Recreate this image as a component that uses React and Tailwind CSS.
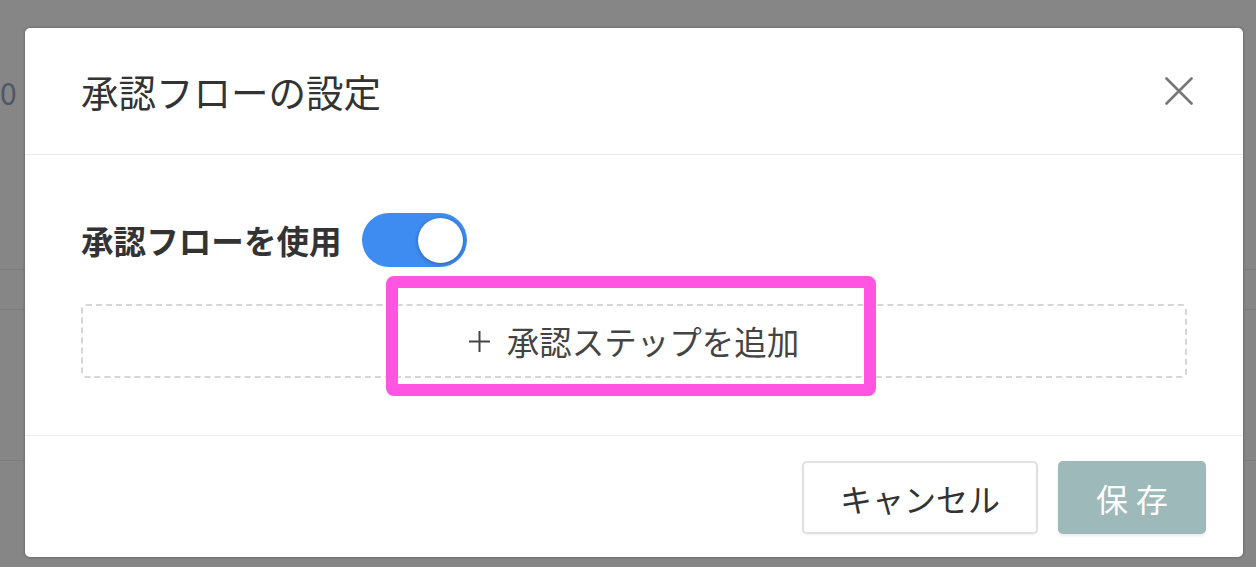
import { useState } from "react";

function Toggle({ on, onChange }) {
  return (
    <button
      type="button"
      onClick={() => onChange(!on)}
      className={`relative flex h-[54px] w-[105px] items-center rounded-full px-[4px] transition ${
        on ? "justify-end bg-[#3e8bf1]" : "justify-start bg-[#cfcfcf]"
      }`}
    >
      <span className="block h-[45px] w-[45px] rounded-full bg-white shadow-[0_1px_4px_rgba(0,0,0,0.3)]" />
    </button>
  );
}

export default function App() {
  const [usarFluxo, setUsarFluxo] = useState(true);

  return (
    <div
      className="relative h-[567px] w-[1256px] overflow-hidden bg-[#868686]"
      style={{ fontFamily: '"Noto Sans CJK JP", "Noto Sans", sans-serif' }}
    >
      {/* pagina por tras do overlay */}
      <div className="flex flex-col">
        <div className="flex h-[270px] items-start border-b border-[#7d7d7d] pt-[72px]">
          <span className="text-[30px] leading-[40px] text-[#4d5866]">0</span>
        </div>
        <div className="h-[40px] border-b border-[#7d7d7d]" />
        <div className="h-[151px] border-b border-[#7d7d7d]" />
      </div>

      {/* modal */}
      <div className="absolute left-[25px] top-[28px] flex w-[1218px] flex-col rounded-[5px] bg-white shadow-[0_0_3px_rgba(0,0,0,0.35)]">
        <div className="flex h-[127px] items-center justify-between border-b border-[#ececec] pl-[56px] pr-[50px]">
          <h1 className="text-[37.5px] font-normal leading-none text-[#333]">
            承認フローの設定
          </h1>
          <button type="button" className="text-[#777]">
            <svg width="28" height="28" viewBox="0 0 28 28" fill="none">
              <path
                d="M1.5 1.5 L26.5 26.5 M26.5 1.5 L1.5 26.5"
                stroke="currentColor"
                strokeWidth="2.6"
                strokeLinecap="round"
              />
            </svg>
          </button>
        </div>

        <div className="relative border-b border-[#ececec] px-[56px] pb-[57px] pt-[58px]">
          <div className="flex h-[54px] items-center gap-[20px]">
            <span className="text-[32.6px] font-bold leading-none text-[#333]">
              承認フローを使用
            </span>
            <Toggle on={usarFluxo} onChange={setUsarFluxo} />
          </div>

          <button
            type="button"
            className="mt-[37px] flex h-[74px] w-full items-center justify-center gap-[17px] rounded-[5px] border-2 border-dashed border-[#d6d6d6] text-[32.5px] leading-none text-[#444]"
          >
            <svg width="21" height="21" viewBox="0 0 21 21" fill="none">
              <path d="M10.5 0 V21 M0 10.5 H21" stroke="#444" strokeWidth="2" />
            </svg>
            <span>承認ステップを追加</span>
          </button>

          <div className="pointer-events-none absolute left-[361px] top-[121px] h-[120px] w-[490px] rounded-[8px] border-[12px] border-[#ff55e1]" />
        </div>

        <div className="flex items-center justify-end gap-[20px] pb-[23px] pr-[37px] pt-[25px]">
          <button
            type="button"
            className="h-[73px] w-[236px] rounded-[5px] border-2 border-[#e0e0e0] bg-white text-[32px] leading-none text-[#333] shadow-[0_1px_2px_rgba(0,0,0,0.06)]"
          >
            キャンセル
          </button>
          <button
            type="button"
            className="h-[73px] w-[148px] rounded-[5px] bg-[#9db9b9] pl-[8px] text-[32px] leading-none tracking-[8px] text-white shadow-[0_2px_3px_rgba(0,0,0,0.08)]"
          >
            保存
          </button>
        </div>
      </div>
    </div>
  );
}
